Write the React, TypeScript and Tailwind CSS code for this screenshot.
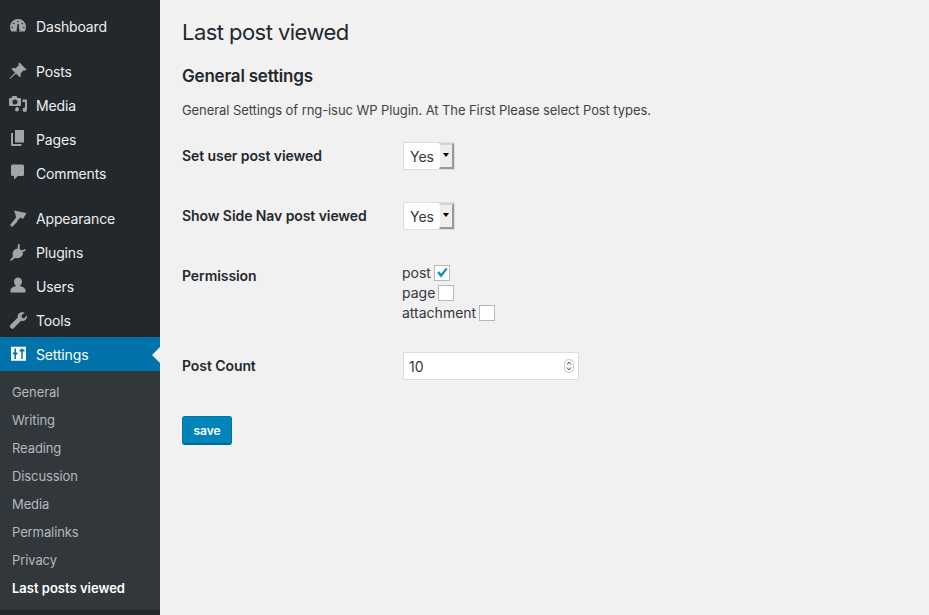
const font = "font-['Inter','Noto_Sans',sans-serif]";

function Dash() {
  return (
    <path fillRule="evenodd" d="M10 3a8 8 0 0 0-8 8c0 1.800.6 3.300 1.500 4.500h13c.9-1.200 1.500-2.700 1.500-4.500a8 8 0 0 0-8-8zM10 4.700a.8.8 0 1 1 0 1.600.8.8 0 0 1 0-1.600zM5.700 6.700a.8.8 0 1 1 0 1.600.8.8 0 0 1 0-1.600zM14.300 6.700a.8.8 0 1 1 0 1.600.8.8 0 0 1 0-1.600zM4.200 10.700a.8.8 0 1 1 0 1.600.8.8 0 0 1 0-1.600zM15.800 10.700a.8.8 0 1 1 0 1.600.8.8 0 0 1 0-1.600zM9.500 8h1.300l.2 4.800a1.500 1.500 0 1 1-2 0z" />
  );
}

const icons: Record<string, React.ReactNode> = {
  dashboard: <Dash />,
  posts: <path d="M11.500 1.500 18.500 8.500 17 9.800 16 9 12.500 12.500C13 14 12.700 15.300 11.800 16.200L8 12.400 2 18 1.500 17.500 7 11.500 3.500 8C4.500 7 5.900 6.800 7.400 7.400L11 4 10.200 3z" />,
  media: (
    <path fillRule="evenodd" d="M4.500 1h4l1 2H12a1 1 0 0 1 1 1v6a1 1 0 0 1-1 1H2a1 1 0 0 1-1-1V4a1 1 0 0 1 1-1h1.500zM7 4.500a2.500 2.500 0 1 0 0 5 2.500 2.500 0 0 0 0-5zM14.500 4.500h4.500v10.200a2.200 2.200 0 1 1-2-2.100V7h-2.500zM9 12a2 2 0 0 1 2 2 2.500 2.500 0 0 1-2.500 2.500A2 2 0 0 1 7 15c0-1.500 1-3 2-3z" />
  ),
  pages: <path d="M7 1h9v12.500H7zM5 4v11h8.500v2H4a1 1 0 0 1-1-1V4z" />,
  comments: <path d="M4.500 1.500h10a1.500 1.500 0 0 1 1.500 1.500v8.500a1.500 1.500 0 0 1-1.500 1.500H10l-4 3.500V13H4.500A1.500 1.500 0 0 1 3 11.500V3a1.500 1.500 0 0 1 1.500-1.500z" />,
  appearance: <path d="M6 2.500 18.500 5 15 11 12.500 9.500 10 12 9 14 4 19 2 17 6.500 11.500 8 9.500 7.500 6.500z" />,
  plugins: <path d="M10 2 12 2.500 11.500 6.500 13.500 8.500 17 7 18 8.500 14.500 10 15 12C14 15 11 17 7 16L3 19 2 18 5 14.500C4 11 5 8 8 7L9.500 6.500z" />,
  users: <path d="M10 1.500a4 4 0 0 1 4 4.200c0 2-1.200 3.600-2.300 4.300 3 .6 5.800 2 5.800 4.500v2h-15v-2c0-2.500 2.800-3.900 5.800-4.500C7.200 9.300 6 7.700 6 5.700a4 4 0 0 1 4-4.200z" />,
  tools: <path d="M16.700 2.500 13.500 5.500v1.500l1.300 1.200h1.500L18.800 5.300c.5 2-.1 4-1.800 5-1.300.8-2.700.9-4 .4L6 18a2.300 2.300 0 0 1-3.500-3.300l7.300-7.200c-.4-1.500 0-3.200 1.300-4.300 1.400-1.200 3.100-1.300 5.600-.7z" />,
  settings: (
    <path fillRule="evenodd" d="M3 2.700h15v14H3zM6.500 4.500v4H5V10.500h1.500v4.500H8V10.500h1.500V8.500H8v-4zM13.300 4.500v1H11.500V7.500h1.800v7.500h1.500V7.500h1.700V5.500h-1.700v-1z" />
  ),
};

function Item({ icon, label, active }: { icon: string; label: string; active?: boolean }) {
  return (
    <div className={`relative flex h-[34px] items-center ${active ? "bg-[#0073aa] text-white" : "text-[#eeeeee]"}`}>
      <svg viewBox="0 0 20 20" className={`ml-[8px] h-[20px] w-[20px] ${active ? "fill-white" : "fill-[#a0a5aa]"}`}>
        {icons[icon]}
      </svg>
      <span className="ml-[8px] text-[14px] tracking-[-0.15px]">{label}</span>
      {active && (
        <span className="absolute right-0 top-[10px] h-0 w-0 border-y-[8px] border-r-[8px] border-y-transparent border-r-[#f1f1f1]" />
      )}
    </div>
  );
}

const subItems = ["General", "Writing", "Reading", "Discussion", "Media", "Permalinks", "Privacy"];

function Select({ className }: { className: string }) {
  return (
    <div className={`flex h-[28px] w-[52px] border border-[#dddddd] bg-white ${className}`}>
      <span className="flex-1 pl-[6px] text-[14px] leading-[27px] text-[#32373c]">Yes</span>
      <span className="flex w-[15px] items-start justify-center border-b-[2px] border-l border-r-[2px] border-t-[2px] border-b-[#999999] border-l-white border-r-[#999999] border-t-[#d4d4d4] bg-[#eeeeee] pt-[8px]">
        <span className="h-0 w-0 border-x-[3px] border-t-[4px] border-x-transparent border-t-black" />
      </span>
    </div>
  );
}

function Check({ checked }: { checked?: boolean }) {
  return (
    <span className="ml-[3px] flex h-[16px] w-[16px] items-center justify-center border border-[#b4b9be] bg-white">
      {checked && (
        <svg viewBox="0 0 16 16" className="h-[16px] w-[16px]">
          <path d="M2.500 8 4.500 6 7 8.500 12.500 2 14.500 3.500 7 13z" className="fill-[#1e8cbe]" />
        </svg>
      )}
    </span>
  );
}

export default function App() {
  return (
    <div className={`flex h-[615px] w-[929px] overflow-hidden bg-[#f1f1f1] ${font}`}>
      <aside className="w-[160px] shrink-0 bg-[#23282d]">
        <div className="pt-[9px]">
          <Item icon="dashboard" label="Dashboard" />
        </div>
        <div className="mt-[11px]">
          <Item icon="posts" label="Posts" />
          <Item icon="media" label="Media" />
          <Item icon="pages" label="Pages" />
          <Item icon="comments" label="Comments" />
        </div>
        <div className="mt-[11px]">
          <Item icon="appearance" label="Appearance" />
          <Item icon="plugins" label="Plugins" />
          <Item icon="users" label="Users" />
          <Item icon="tools" label="Tools" />
          <Item icon="settings" label="Settings" active />
        </div>
        <ul className="bg-[#32373c] pb-[7px] pt-[8px] text-[13px]">
          {subItems.map((s) => (
            <li key={s} className="flex h-[28px] items-center pl-[12px] tracking-[-0.1px] text-[#b4b9be]">
              {s}
            </li>
          ))}
          <li className="flex h-[28px] items-center pl-[12px] font-semibold text-white">Last posts viewed</li>
        </ul>
      </aside>

      <main className="flex-1 pl-[22px] text-[#23282d]">
        <h1 className="mt-[18px] text-[22px] leading-[29px] tracking-[-0.55px]">Last post viewed</h1>
        <h2 className="mt-[19px] text-[17px] font-semibold leading-[20px] tracking-[-0.2px]">General settings</h2>
        <p className="mt-[15px] text-[13px] leading-[18px] tracking-[-0.08px] text-[#3c434a]">
          General Settings of rng-isuc WP Plugin. At The First Please select Post types.
        </p>

        <div className="mt-[23px] flex">
          <label className="w-[220px] pt-[5px] text-[14px] font-semibold leading-[18px] tracking-[-0.08px]">Set user post viewed</label>
          <Select className="ml-px" />
        </div>
        <div className="mt-[32px] flex">
          <label className="w-[220px] pt-[5px] text-[14px] font-semibold leading-[18px] tracking-[-0.08px]">Show Side Nav post viewed</label>
          <Select className="ml-px" />
        </div>
        <div className="mt-[32px] flex">
          <label className="w-[220px] pt-[5px] text-[14px] font-semibold leading-[18px] tracking-[-0.08px]">Permission</label>
          <div className="pt-px text-[14px] leading-[20px] text-[#32373c]">
            <div className="flex items-center">post<Check checked /></div>
            <div className="flex items-center">page<Check /></div>
            <div className="flex items-center">attachment<Check /></div>
          </div>
        </div>
        <div className="mt-[29px] flex">
          <label className="w-[220px] pt-[5px] text-[14px] font-semibold leading-[18px] tracking-[-0.08px]">Post Count</label>
          <div className="ml-px flex h-[28px] w-[176px] items-center justify-between border border-[#dddddd] bg-white pl-[5px] pr-[4px] text-[14px] text-[#32373c]">
            <span>10</span>
            <svg viewBox="0 0 10 14" className="h-[14px] w-[10px]">
              <rect x="0.500" y="0.500" width="9" height="13" rx="4" className="fill-[#fafafa] stroke-[#c8c8c8]" />
              <path d="M3 5.500 5 3l2 2.500M3 8.500 5 11l2-2.500" className="fill-none stroke-[#555555]" />
            </svg>
          </div>
        </div>
        <button className="mt-[36px] h-[29px] w-[50px] rounded-[3px] border border-b-[2px] border-[#0073aa] border-b-[#006799] bg-[#0085ba] pt-px text-[12px] font-semibold text-white">
          save
        </button>
      </main>
    </div>
  );
}
